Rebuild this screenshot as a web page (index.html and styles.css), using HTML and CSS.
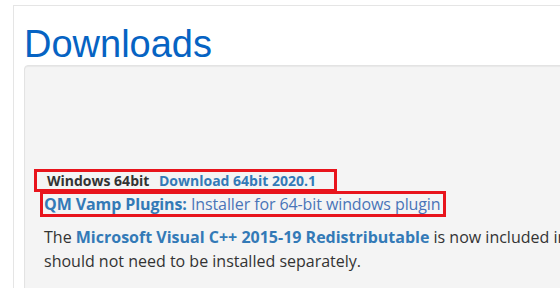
FILE: index.html
```html
<!DOCTYPE html>
<html>
<head>
<meta charset="utf-8">
<link rel="stylesheet" href="styles.css">
</head>
<body>
<div class="page">
  <h1 class="title">Downloads</h1>
  <div class="well">
    <div class="spacer"></div>
    <div class="mark mark-1"><span class="label">Windows 64bit</span> <a class="dl" href="#">Download 64bit 2020.1</a></div>
    <div class="mark mark-2"><a class="plug" href="#"><b>QM Vamp Plugins:</b> Installer for 64-bit windows plugin</a></div>
    <p class="note">The <a class="strong-link" href="#">Microsoft Visual C++ 2015-19 Redistributable</a> is now included in the installer and should not need to be installed separately.</p>
  </div>
</div>
</body>
</html>
```

FILE: styles.css
```css
html, body {
  margin: 0;
  padding: 0;
  background: #fff;
  overflow: hidden;
}
body {
  font-family: "Open Sans", "Liberation Sans", sans-serif;
  color: #333;
}
.page {
  margin: 5px 0 0 13px;
  width: 800px;
  border: 1px solid #e5e5e5;
  padding: 0 10px 40px 10px;
}
.title {
  font-family: "Liberation Sans", Arial, sans-serif;
  font-weight: 400;
  font-size: 38px;
  line-height: 40px;
  color: #0663c3;
  margin: 18px 0 0 0;
  height: 41px;
}
.well {
  background: #f4f4f4;
  border: 1px solid #e3e3e3;
  border-radius: 4px;
  box-shadow: inset 0 1px 1px rgba(0,0,0,.05);
  padding: 0 19px 19px 19px;
  display: flex;
  flex-direction: column;
  align-items: flex-start;
}
.spacer {
  height: 103px;
}
.mark {
  border: 3px solid #e8141c;
}
.mark-1 {
  margin-left: -10px;
  padding: 0 18px 0 10px;
  font-size: 14px;
  line-height: 17px;
  font-weight: 700;
}
.label { color: #333; margin-right: 6px; }
.dl { color: #337ab7; text-decoration: none; }
.mark-2 {
  margin-left: -4px;
  margin-top: -1px;
  padding: 0 2px 0 1px;
  font-size: 16px;
  line-height: 20px;
  letter-spacing: -0.1px;
}
.plug { color: #4a74b8; text-decoration: none; }
.plug b { color: #337ab7; }
.note {
  font-size: 16px;
  line-height: 24px;
  margin: 8px 0 0 0;
  width: 700px;
}
.strong-link { color: #337ab7; font-weight: 700; text-decoration: none; }
```
